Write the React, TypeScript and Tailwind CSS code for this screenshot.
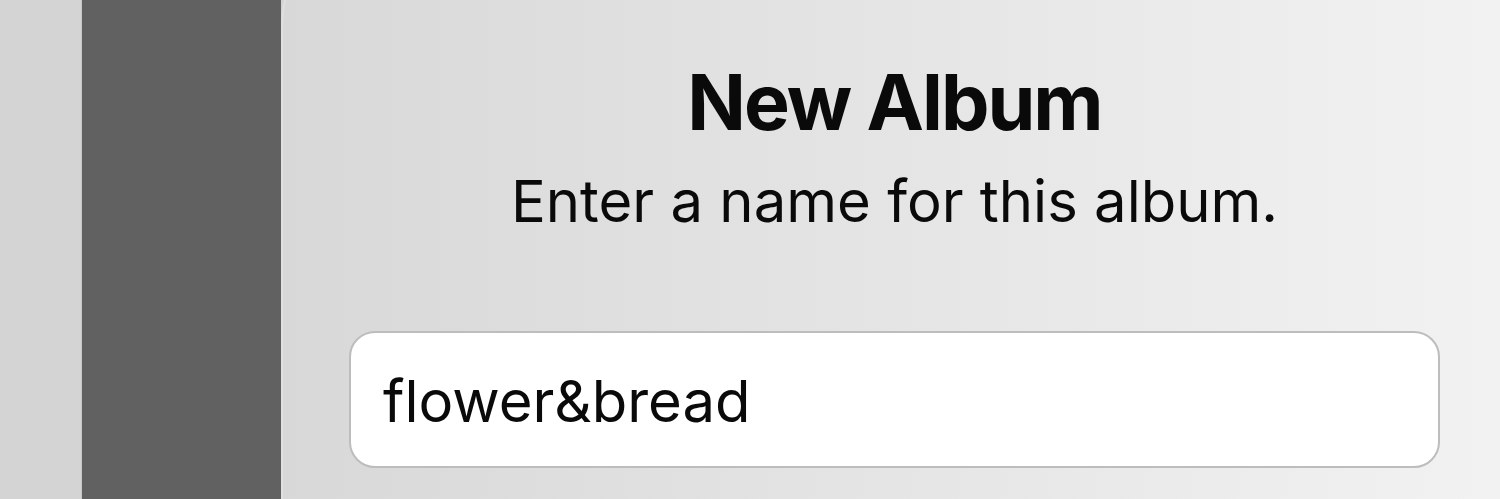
export default function App() {
  return (
    <div
      className="flex h-[499px] w-[1500px] overflow-hidden bg-[#d3d3d3]"
      style={{ fontFamily: 'Inter, "Noto Sans", sans-serif' }}
    >
      {/* left edge of the page behind */}
      <div className="w-[82px] shrink-0 border-r border-[#c6c6c6] bg-[#d4d4d4]" />
      {/* dark side panel */}
      <div className="w-[199px] shrink-0 bg-[#616161]" />
      {/* alert sheet */}
      <div className="-mt-[75px] flex h-[574px] w-[1225px] shrink-0 flex-col items-center rounded-tl-[100px] border-l-2 border-[#e0e0e0] bg-gradient-to-r from-[#d8d8d8] to-[#f2f2f2] px-[66px] pt-[139px]">
        <h1 className="text-[77px] font-bold leading-[77px] tracking-[-2px] text-[#0a0a0a]">
          New Album
        </h1>
        <p className="mt-[31px] text-[58px] leading-[58px] text-[#0a0a0a]">
          Enter a name for this album.
        </p>
        <div className="mt-[101px] h-[137px] w-full rounded-[26px] border-2 border-[#bdbdbd] bg-white pl-[32px] pt-[39px]">
          <span className="block text-[58px] leading-[58px] text-[#0a0a0a]">flower&amp;bread</span>
        </div>
      </div>
    </div>
  )
}
